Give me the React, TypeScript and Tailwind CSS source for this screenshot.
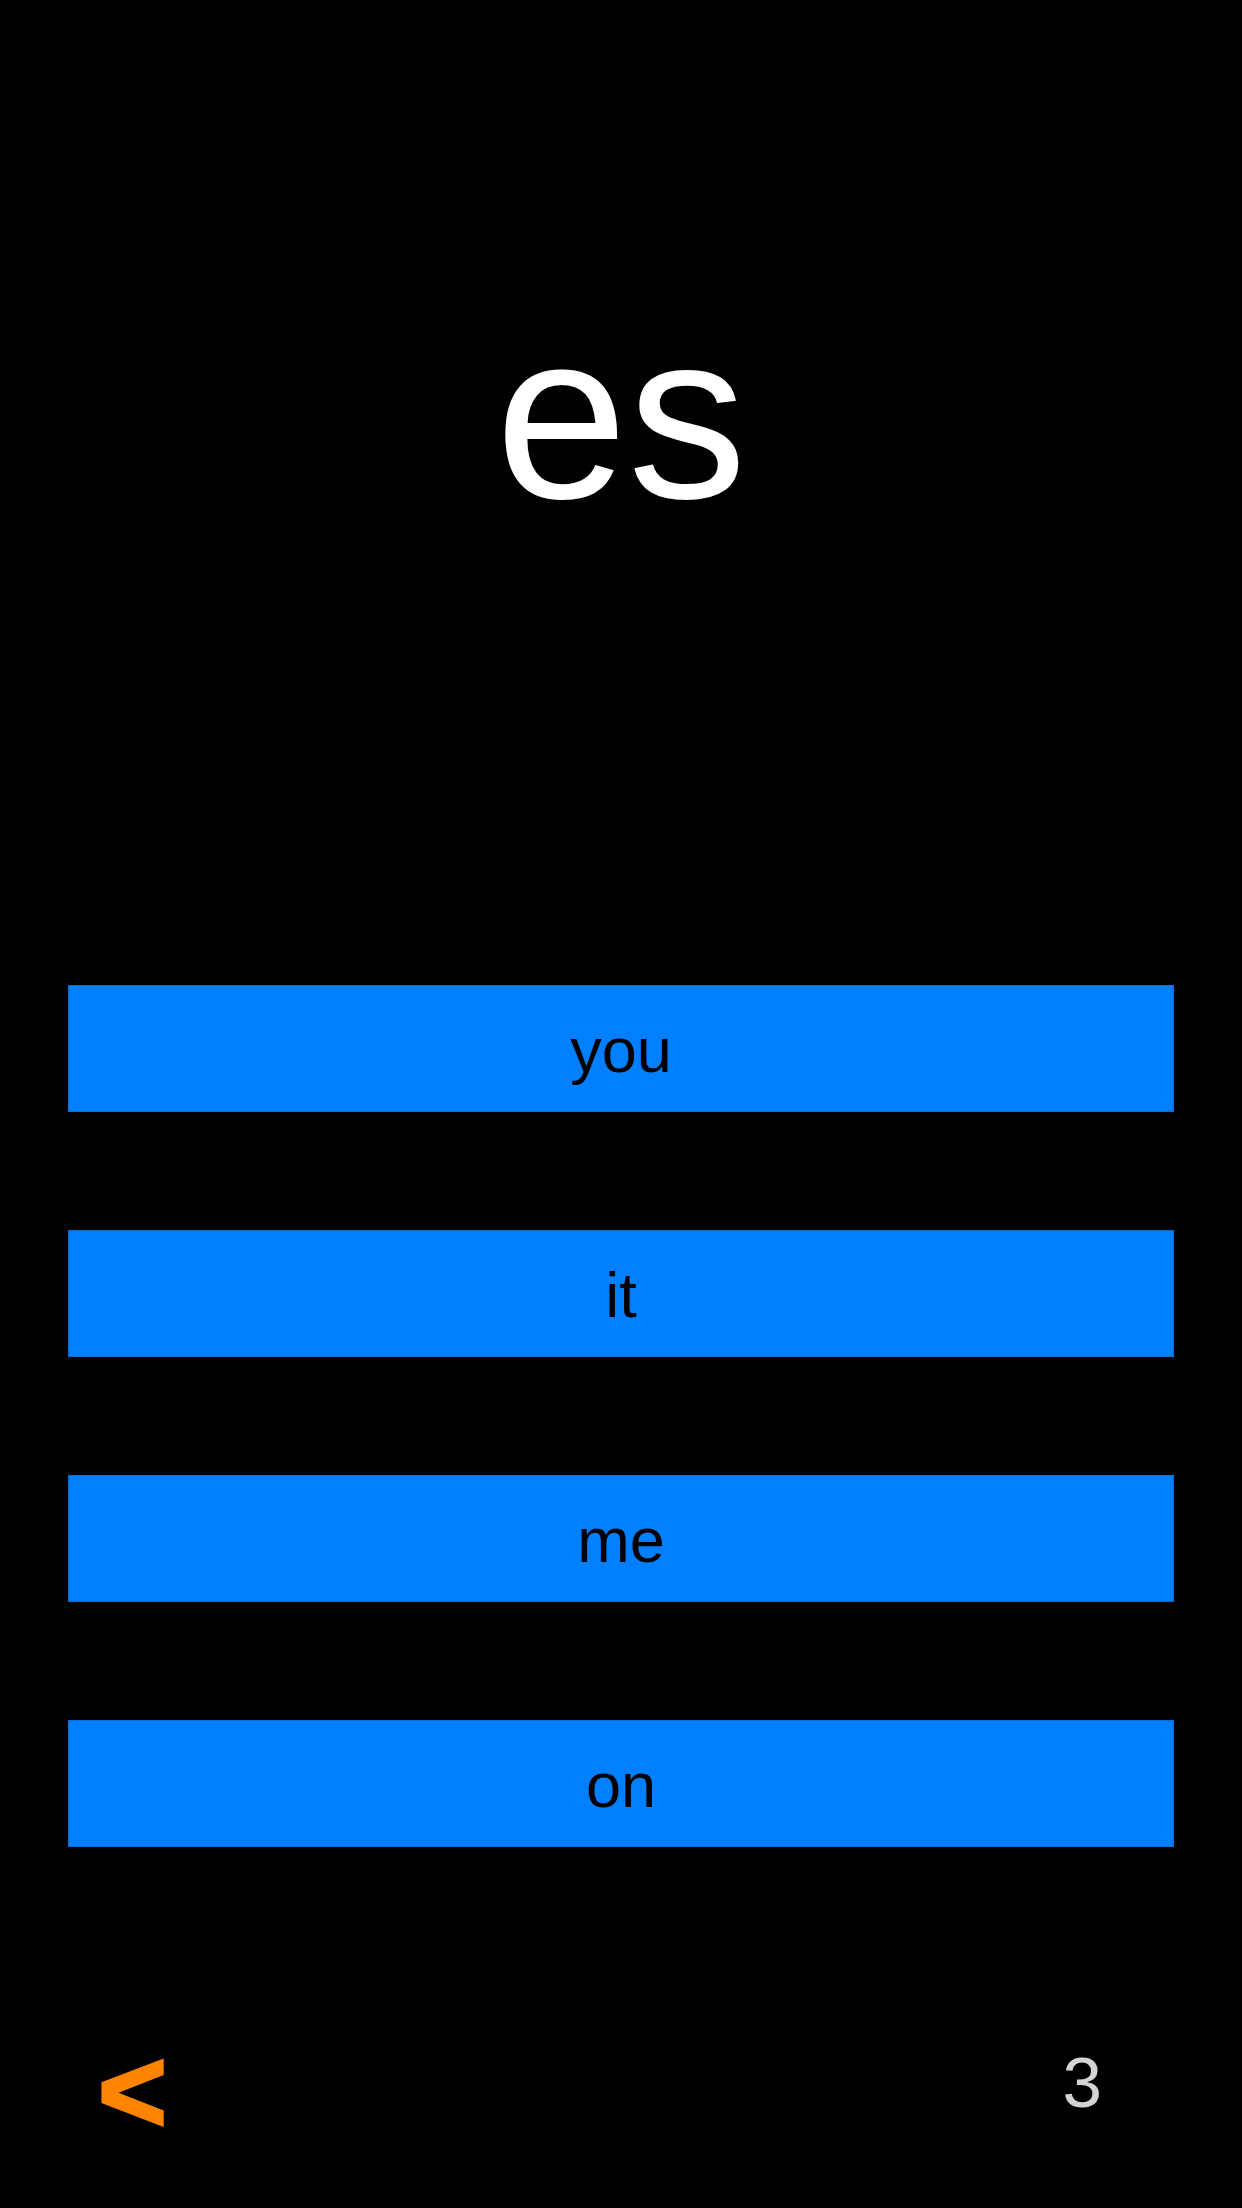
const ANSWERS = ["you", "it", "me", "on"];

export default function App() {
  return (
    <div
      className="w-[1242px] h-[2208px] bg-black flex flex-col overflow-hidden"
      style={{ fontFamily: '"Liberation Sans", Arial, sans-serif' }}
    >
      {/* Word */}
      <div className="pt-[297px] flex justify-center">
        <span className="text-[238px] leading-none text-white">es</span>
      </div>

      {/* Choices */}
      <div className="mt-[450px] px-[68px] flex flex-col gap-[118px]">
        {ANSWERS.map((a) => (
          <button
            key={a}
            className="h-[127px] w-full bg-[#0080ff] border border-[#0a6cd0] flex items-center justify-center"
          >
            <span className="mt-[3px] text-[63px] leading-none text-black">{a}</span>
          </button>
        ))}
      </div>

      {/* Footer */}
      <div className="mt-[185px] flex justify-between items-start pl-[98px] pr-[140px]">
        <span className="text-[118px] leading-none font-bold text-[#ff8400] [-webkit-text-stroke:3px_#ff8400]">&lt;</span>
        <span className="mt-[15px] text-[71px] leading-none text-[#d4d4d4]">3</span>
      </div>
    </div>
  );
}
